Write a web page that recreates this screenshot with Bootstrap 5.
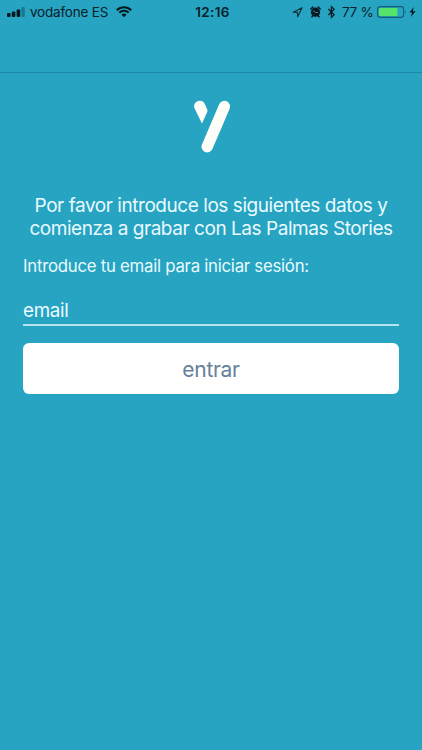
<!DOCTYPE html>
<html lang="es">
<head>
<meta charset="utf-8">
<meta name="viewport" content="width=device-width, initial-scale=1">
<title>Las Palmas Stories</title>
<link href="https://cdn.jsdelivr.net/npm/bootstrap@5.3.0/dist/css/bootstrap.min.css" rel="stylesheet">
<style>
body { background: #26a4c2; font-family: Inter, "Liberation Sans", sans-serif; min-height: 100vh; }
.top-bar { height: 73px; border-bottom: 1px solid #1f86a5; }
.status { height: 24px; font-size: 13.5px; line-height: 24px; color: #0b2029; padding: 0 4px 0 7px; }
.status svg { display: block; flex: none; }
.carrier { margin-left: 5px; width: 78px; white-space: nowrap; letter-spacing: -.2px; }
.clock { left: 0; right: 0; top: 0; font-weight: 600; text-align: center; padding-left: 3px; letter-spacing: .3px; }
.percent { width: 31px; white-space: nowrap; letter-spacing: -.3px; }
.screen { padding: 27px 23px 0; color: #eafaff; }
.intro { font-size: 19px; line-height: 23px; margin: 40px -10px 0; letter-spacing: -.45px; white-space: nowrap; }
.field-label { font-size: 16.8px; line-height: 22px; margin-top: 15px; letter-spacing: -.26px; white-space: nowrap; }
.email-field, .email-field:focus { height: 34px; margin-top: 15px; border-bottom: 2px solid #b4e4ef; background: transparent; font-size: 18.8px; line-height: 27px; padding-top: 5px !important; letter-spacing: -.3px; color: #eafaff; box-shadow: none; }
.email-field::placeholder { color: #eafaff; opacity: 1; }
.enter { height: 50.5px; margin-top: 17px; padding-top: 2px; border-radius: 6px; background: #fff; color: #64809a; font-size: 21px; line-height: 1; letter-spacing: -.3px; }
</style>
</head>
<body>
<header class="top-bar">
  <div class="status d-flex align-items-center position-relative">
    <svg width="18" height="24" viewBox="0 0 18 24"><g fill="#071a22"><rect y="13" width="3.6" height="4" rx="1"/><rect x="4.8" y="11.5" width="3.6" height="5.5" rx="1"/><rect x="9.6" y="9.5" width="3.6" height="7.5" rx="1"/></g><rect x="14.4" y="7" width="3.4" height="10" rx="1" fill="#1c7892"/></svg>
    <span class="carrier">vodafone ES</span>
    <svg class="ms-2" width="16" height="24" viewBox="0 0 16 24" fill="none" stroke="#071a22" stroke-width="2"><path d="M.8 10.2a10.2 10.2 0 0 1 14.4 0M3.3 12.8a6.7 6.7 0 0 1 9.4 0"/><path d="M8 17.2l-2.5-2.5a3.6 3.6 0 0 1 5 0z" fill="#071a22" stroke="none"/></svg>
    <span class="clock position-absolute">12:16</span>
    <div class="d-flex align-items-center ms-auto">
      <svg width="50" height="24" viewBox="292 0 50 24"><path d="M293.2 12.2l8.8-4.4-4.3 9-.3-4.5z" fill="none" stroke="#12323e" stroke-width="1.2" stroke-linejoin="round"/><circle cx="315.5" cy="12.2" r="4.6" fill="#071a22"/><path d="M310.8 9l2-1.9M320.2 9l-2-1.9M312.6 16l-.6.8M318.4 16l.6.8" stroke="#071a22" stroke-width="1.5" stroke-linecap="round"/><path d="M313.3 10.6l2.2 1.9h2.4" fill="none" stroke="#26a4c2" stroke-width=".9"/><path d="M328.4 9l5.8 5.8-2.8 2.6V6.6l2.8 2.6-5.8 5.8" fill="none" stroke="#071a22" stroke-width="1.2"/></svg>
      <span class="percent me-1">77 %</span>
      <svg width="41" height="24" viewBox="377 0 41 24"><rect x="377.6" y="6.6" width="26" height="10.8" rx="2.6" fill="none" stroke="#165e72" stroke-width="1.1"/><rect x="379" y="8" width="18.5" height="8" rx="1" fill="#55e36b"/><path d="M405 10q1.6 2 0 4z" fill="#165e72"/><path d="M413.8 7l-4.4 5.5h2.7l-1.2 4.6 4.7-5.9h-2.8z" fill="#071a22"/></svg>
    </div>
  </div>
</header>
<main class="screen">
  <svg class="d-block mx-auto" width="38" height="54" viewBox="192 100 38 54"><path d="M224.4 106.5L207.2 146.7" stroke="#fffffa" stroke-width="11.4" stroke-linecap="round"/><path d="M194.5 108.2c-1.6-3.6 1.4-7.4 5.2-7.4 2.6 0 4.2 1.2 5.2 3.3l2.4 5.7q.4 1 0 2l-5.3 11.8z" fill="#fffffa"/></svg>
  <p class="intro text-center mb-0">Por favor introduce los siguientes datos y<br>comienza a grabar con Las Palmas Stories</p>
  <form>
    <label class="field-label d-block" for="email">Introduce tu email para iniciar sesión:</label>
    <input class="email-field form-control border-top-0 border-start-0 border-end-0 rounded-0 p-0" id="email" type="email" placeholder="email">
    <button class="enter btn w-100 border-0 px-0 pb-0" type="button">entrar</button>
  </form>
</main>
<script src="https://cdn.jsdelivr.net/npm/bootstrap@5.3.0/dist/js/bootstrap.bundle.min.js"></script>
</body>
</html>
